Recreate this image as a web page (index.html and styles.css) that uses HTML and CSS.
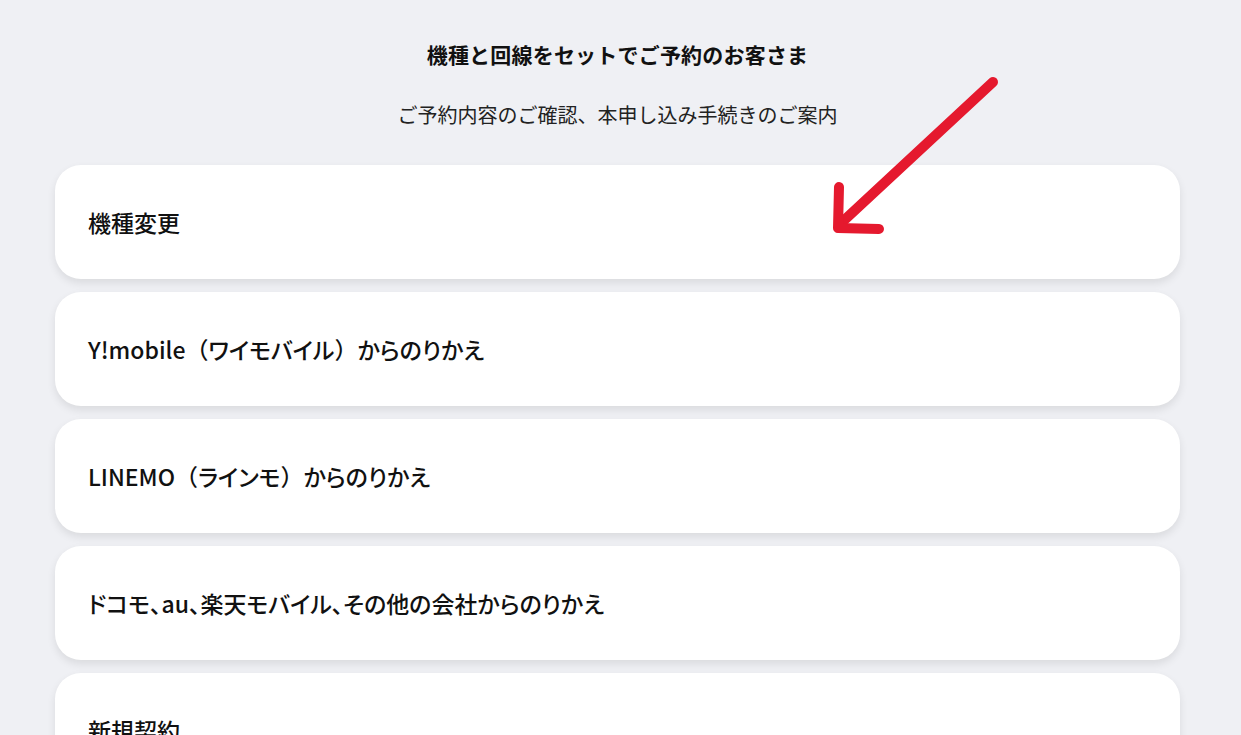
FILE: index.html
```html
<!DOCTYPE html>
<html lang="ja">
<head>
<meta charset="utf-8">
<link rel="stylesheet" href="styles.css">
</head>
<body>
<main class="page">
  <h1 class="title">機種と回線をセットでご予約のお客さま</h1>
  <p class="subtitle">ご予約内容のご確認、本申し込み手続きのご案内</p>
  <ul class="menu">
    <li class="card">機種変更</li>
    <li class="card">Y!mobile<span class="wide">（</span>ワイモバイル<span class="wide">）</span>からのりかえ</li>
    <li class="card">LINEMO<span class="wide">（</span>ラインモ<span class="wide">）</span>からのりかえ</li>
    <li class="card">ドコモ、au、楽天モバイル、その他の会社からのりかえ</li>
    <li class="card">新規契約</li>
  </ul>
  <svg class="arrow" width="200" height="190" viewBox="0 0 200 190">
    <g fill="none" stroke="#e5192e" stroke-width="10" stroke-linecap="round" stroke-linejoin="round">
      <path d="M162 20 L8 163"/>
      <path d="M8 125 L7 166 L48 167"/>
    </g>
  </svg>
</main>
</body>
</html>
```

FILE: styles.css
```css
html, body {
  margin: 0;
  padding: 0;
  background: #eff0f4;
  height: 100%;
  overflow: hidden;
}
body {
  font-family: "Noto Sans CJK JP", "Noto Sans", sans-serif;
  color: #111;
}
.page {
  position: relative;
  width: 1125px;
  margin-left: 55px;
  padding-top: 38px;
}
.title {
  margin: 0;
  text-align: center;
  font-size: 21px;
  font-weight: 700;
  line-height: 32px;
  letter-spacing: 0.2px;
}
.subtitle {
  margin: 30px 0 0;
  text-align: center;
  font-size: 20px;
  font-weight: 400;
  line-height: 30px;
  color: #222;
}
.menu {
  list-style: none;
  margin: 35px 0 0;
  padding: 0;
  display: flex;
  flex-direction: column;
  gap: 13px;
}
.card {
  height: 114px;
  background: #fff;
  border-radius: 26px;
  box-shadow: 0 4px 8px rgba(0, 0, 0, 0.09);
  display: flex;
  align-items: center;
  padding: 0 33px;
  font-size: 23px;
  font-weight: 500;
  color: #111;
  font-feature-settings: "palt";
}
.wide {
  font-feature-settings: normal;
}
.arrow {
  position: absolute;
  left: 776px;
  top: 62px;
}
```
